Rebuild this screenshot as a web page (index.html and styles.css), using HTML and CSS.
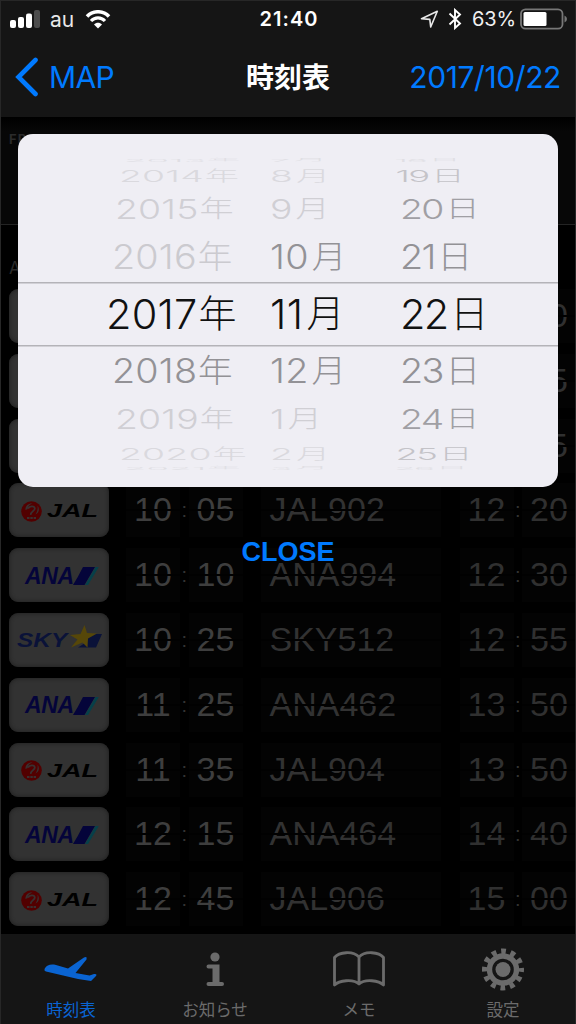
FILE: index.html
```html
<!DOCTYPE html>
<html lang="ja">
<head>
  <meta charset="UTF-8" />
  <meta name="viewport" content="width=device-width, initial-scale=1.0" />
  <title>時刻表</title>
  <link rel="stylesheet" href="styles.css">
</head>
<body>
  <!-- Shared logo shapes -->
  <svg class="defs" width="0" height="0">
    <symbol id="crane" viewBox="0 0 21 21">
      <circle cx="10.5" cy="10.5" r="10.3" fill="#520000"/>
      <path d="M4.500 9C4 4.500 8 1.800 11.500 2.500C8.500 3.500 6.500 5.500 6.800 8ZM16.500 4.500C19 8 18 12 14.500 13.500C16.500 10.500 17 7.500 16.500 4.500Z" fill="#393030"/>
      <path d="M7 7.500C8.500 4.800 13.500 4.500 13.800 7.500C14 10 9.500 10.500 9.800 13.800" fill="none" stroke="#393030" stroke-width="1.800"/>
      <path d="M6 17H8.500M9.300 17H11.800M12.600 17H15" stroke="#393030" stroke-width="1.800"/>
    </symbol>
    <symbol id="anaTail" viewBox="0 0 26 18">
      <path d="M10 0H22L11.500 18H0Q5 10 10 0Z" fill="#04043a"/>
      <path d="M22.500 0H25.800L15 18H12Z" fill="#06404a"/>
    </symbol>
    <symbol id="skyTail" viewBox="0 0 32 23">
      <path d="M21 9H32L26 22.500H8L15 18Z" fill="#0a1238"/>
      <path d="M14.500 0L17 8L27 8.500L18 13.500L17.500 22.500L12.500 17.500L1 22.500L7.500 14.500L0 10L10.500 9Z" fill="#564709"/>
    </symbol>
  </svg>

  <div class="screen">
    <!-- Status bar and navigation -->
    <header>
      <div class="status-bar">
        <div class="status-left">
          <svg width="30" height="18" viewBox="0 0 30 18">
            <rect x="0" y="10" width="6" height="8" rx="2" fill="#fff"/>
            <rect x="8" y="7" width="6" height="11" rx="2" fill="#fff"/>
            <rect x="16" y="3.500" width="6" height="14.500" rx="2" fill="#fff"/>
            <rect x="24" y="0" width="6" height="18" rx="2" fill="#4c4c4c"/>
          </svg>
          <span class="carrier">au</span>
          <svg width="26" height="19" viewBox="0 0 26 19">
            <path d="M2 6.500C8 .2 18 .2 24 6.500" fill="none" stroke="#fff" stroke-width="3.600"/>
            <path d="M6 11C10 6.800 16 6.800 20 11" fill="none" stroke="#fff" stroke-width="3.200"/>
            <path d="M9 14.500C11.300 12 14.700 12 17 14.500L13 18.500Z" fill="#fff"/>
          </svg>
        </div>
        <span class="clock">21:40</span>
        <div class="status-right">
          <svg width="19" height="19" viewBox="0 0 19 19">
            <path d="M1.500 8.800L17.300 1.300L10.700 17L9.800 9.400Z" fill="none" stroke="#e8e8e8" stroke-width="1.600" stroke-linejoin="round"/>
          </svg>
          <svg class="bluetooth" width="14" height="22" viewBox="0 0 14 22">
            <path d="M1.500 5.500L12 15.500L7 20V2L12 6.500L1.500 16.500" fill="none" stroke="#fff" stroke-width="1.900"/>
          </svg>
          <span class="percent">63%</span>
          <svg width="48" height="22" viewBox="0 0 48 22">
            <rect x="1" y="1.300" width="41.500" height="19.400" rx="4.500" fill="none" stroke="#777" stroke-width="1.800"/>
            <rect x="3.500" y="4" width="23" height="14" rx="1.500" fill="#fff"/>
            <path d="M44.500 7.500Q47 8.500 47 11T44.500 14.500Z" fill="#777"/>
          </svg>
        </div>
      </div>
      <nav class="nav-bar">
        <a class="back">
          <svg width="24" height="40" viewBox="0 0 24 40">
            <path d="M20.500 3L3.500 20L20.500 37" fill="none" stroke="#007aff" stroke-width="4.600" stroke-linecap="round" stroke-linejoin="miter"/>
          </svg>
          <span>MAP</span>
        </a>
        <h1>時刻表</h1>
        <a class="date">2017/10/22</a>
      </nav>
    </header>

    <!-- Timetable behind the picker -->
    <section class="route"><span>FROM</span></section>
    <main class="board">
      <div class="board-head">A</div>
      <div class="flight"><div class="logo"></div><b class="edge flap">0</b></div>
      <div class="flight"><div class="logo"></div><b class="edge flap">5</b></div>
      <div class="flight"><div class="logo"></div><b class="edge flap">5</b></div>
      <div class="flight">
        <div class="logo jal"><svg><use href="#crane"/></svg><span>JAL</span></div>
        <b class="flap">10</b><i>:</i><b class="flap">05</b><b class="flap name">JAL902</b><b class="flap arr">12</b><i>:</i><b class="flap arr">20</b>
      </div>
      <div class="flight">
        <div class="logo ana"><span>ANA</span><svg><use href="#anaTail"/></svg></div>
        <b class="flap">10</b><i>:</i><b class="flap">10</b><b class="flap name">ANA994</b><b class="flap arr">12</b><i>:</i><b class="flap arr">30</b>
      </div>
      <div class="flight">
        <div class="logo sky"><span>SKY</span><svg><use href="#skyTail"/></svg></div>
        <b class="flap">10</b><i>:</i><b class="flap">25</b><b class="flap name">SKY512</b><b class="flap arr">12</b><i>:</i><b class="flap arr">55</b>
      </div>
      <div class="flight">
        <div class="logo ana"><span>ANA</span><svg><use href="#anaTail"/></svg></div>
        <b class="flap">11</b><i>:</i><b class="flap">25</b><b class="flap name">ANA462</b><b class="flap arr">13</b><i>:</i><b class="flap arr">50</b>
      </div>
      <div class="flight">
        <div class="logo jal"><svg><use href="#crane"/></svg><span>JAL</span></div>
        <b class="flap">11</b><i>:</i><b class="flap">35</b><b class="flap name">JAL904</b><b class="flap arr">13</b><i>:</i><b class="flap arr">50</b>
      </div>
      <div class="flight">
        <div class="logo ana"><span>ANA</span><svg><use href="#anaTail"/></svg></div>
        <b class="flap">12</b><i>:</i><b class="flap">15</b><b class="flap name">ANA464</b><b class="flap arr">14</b><i>:</i><b class="flap arr">40</b>
      </div>
      <div class="flight">
        <div class="logo jal"><svg><use href="#crane"/></svg><span>JAL</span></div>
        <b class="flap">12</b><i>:</i><b class="flap">45</b><b class="flap name">JAL906</b><b class="flap arr">15</b><i>:</i><b class="flap arr">00</b>
      </div>
    </main>

    <!-- Tab bar -->
    <footer>
      <a class="tab active">
        <svg width="54" height="44" viewBox="0 0 54 44">
          <path d="M.5 21C3 16.500 7 16 12 17L24 20.500L40 9.500Q43.500 8 42.500 11.500L31.500 25L45.500 27.500L50 26Q53.500 25.500 52 28L47 33L34 31L2 23.500Q0 23 .5 21Z" fill="#0a64d2"/>
        </svg>
        <span>時刻表</span>
      </a>
      <a class="tab">
        <svg width="54" height="44" viewBox="0 0 54 44">
          <circle cx="27" cy="9" r="4.600" fill="#6b6b6b"/>
          <path d="M20.500 16.500H31.500V34H34Q36 34 36 36T34 38H20.500Q18.500 38 18.500 36T20.500 34H24.500V20.500H20.500Q18.500 20.500 18.500 18.500T20.500 16.500Z" fill="#6b6b6b"/>
        </svg>
        <span>お知らせ</span>
      </a>
      <a class="tab">
        <svg width="54" height="44" viewBox="0 0 54 44">
          <path d="M2.500 37V9.500C7 4 21 2.500 27 9C33 2.500 47 4 51.500 9.500V37C47 32.500 33 30.500 27 36C21 30.500 7 32.500 2.500 37ZM27 9V36" fill="none" stroke="#6b6b6b" stroke-width="2.800" stroke-linejoin="round"/>
        </svg>
        <span>メモ</span>
      </a>
      <a class="tab">
        <svg width="54" height="44" viewBox="0 0 54 44">
          <circle cx="27" cy="21.500" r="13.500" fill="none" stroke="#6b6b6b" stroke-width="5.400"/>
          <circle cx="27" cy="21.500" r="18.300" fill="none" stroke="#6b6b6b" stroke-width="5.400" stroke-dasharray="4.790 4.790" stroke-dashoffset="2.400"/>
          <circle cx="27" cy="21.500" r="7.500" fill="#6b6b6b"/>
        </svg>
        <span>設定</span>
      </a>
    </footer>

    <!-- Date picker dialog -->
    <div class="dialog">
      <div class="picker">
        <div class="wheel year">
          <p class="edge-row"><span>2013<em>年</em></span></p>
          <p class="far up"><span>2014<em>年</em></span></p>
          <p class="mid up"><span>2015<em>年</em></span></p>
          <p class="near up"><span>2016<em>年</em></span></p>
          <p class="selected"><span>2017<em>年</em></span></p>
          <p class="near live"><span>2018<em>年</em></span></p>
          <p class="mid"><span>2019<em>年</em></span></p>
          <p class="far"><span>2020<em>年</em></span></p>
          <p class="edge-row"><span>2021<em>年</em></span></p>
        </div>
        <div class="wheel month">
          <p class="edge-row"><span>7<em>月</em></span></p>
          <p class="far up"><span>8<em>月</em></span></p>
          <p class="mid up"><span>9<em>月</em></span></p>
          <p class="near up live"><span>10<em>月</em></span></p>
          <p class="selected"><span>11<em>月</em></span></p>
          <p class="near live"><span>12<em>月</em></span></p>
          <p class="mid"><span>1<em>月</em></span></p>
          <p class="far"><span>2<em>月</em></span></p>
          <p class="edge-row"><span>3<em>月</em></span></p>
        </div>
        <div class="wheel day">
          <p class="edge-row"><span>18<em>日</em></span></p>
          <p class="far up live"><span>19<em>日</em></span></p>
          <p class="mid up live"><span>20<em>日</em></span></p>
          <p class="near up live"><span>21<em>日</em></span></p>
          <p class="selected"><span>22<em>日</em></span></p>
          <p class="near live"><span>23<em>日</em></span></p>
          <p class="mid live"><span>24<em>日</em></span></p>
          <p class="far live"><span>25<em>日</em></span></p>
          <p class="edge-row"><span>26<em>日</em></span></p>
        </div>
      </div>
      <button type="button">CLOSE</button>
    </div>
  </div>
</body>
</html>
```
FILE: styles.css
```css
/* Base styling */
* {
  box-sizing: border-box;
}
body {
  margin: 0;
  background: #000;
  font-family: Inter, "Noto Sans CJK JP", sans-serif;
}
svg {
  display: block;
  flex: none;
}
.defs {
  position: absolute;
}
.screen {
  position: relative;
  width: 576px;
  height: 1024px;
  overflow: hidden;
  display: flex;
  flex-direction: column;
}
/* Thin frame round the screen */
.screen::after {
  content: "";
  position: absolute;
  inset: 0;
  border: 1px solid #272727;
  border-bottom: 0;
}
/* Header */
header {
  height: 117px;
  background: #151515;
  color: #fff;
}
.status-bar {
  display: grid;
  grid-template-columns: 1fr auto 1fr;
  align-items: center;
  height: 38px;
  padding: 0 8px 0 10px;
}
.status-left,
.status-right {
  display: flex;
  align-items: center;
}
.status-right {
  justify-content: flex-end;
}
.carrier {
  font-size: 21px;
  margin: 0 11px 0 10px;
  color: #e8e8e8;
}
.clock {
  font-size: 20px;
  font-weight: 600;
  letter-spacing: 1px;
}
.bluetooth {
  margin: 0 10px 0 9px;
}
.percent {
  font-size: 20px;
  letter-spacing: -0.1px;
  margin-right: 4px;
  color: #f0f0f0;
}
.nav-bar {
  display: grid;
  grid-template-columns: 1fr auto 1fr;
  align-items: center;
  height: 77px;
  padding: 0 15px;
  font-size: 30px;
  color: #007aff;
}
.back {
  display: flex;
  align-items: center;
  gap: 10px;
  letter-spacing: -0.6px;
}
.nav-bar h1 {
  margin: 0;
  padding-top: 2px;
  font-size: 28px;
  font-weight: 700;
  line-height: 40px;
  color: #fff;
}
.date {
  text-align: right;
  letter-spacing: -0.4px;
}
/* Timetable */
.route {
  height: 108px;
  padding: 15px 9px;
  background: linear-gradient(#000, #070707 14px);
  border-bottom: 1px solid #242424;
  font-size: 13px;
  font-weight: 700;
  line-height: 14px;
  letter-spacing: 1px;
  color: #2b2b2b;
}
.board {
  height: 709px;
  padding-left: 9px;
  overflow: hidden;
}
.board-head {
  height: 64px;
  padding-top: 32px;
  font-size: 17px;
  line-height: 23px;
  color: #2b2b2b;
}
.flight {
  display: flex;
  align-items: center;
  height: 54px;
  margin-bottom: 10.8px;
}
.logo {
  width: 100px;
  height: 54px;
  padding-top: 2px;
  margin-right: 17px;
  border-radius: 9px;
  background: #323232;
  box-shadow: inset 0 0 4px #1c1c1c;
  display: flex;
  align-items: center;
  justify-content: center;
  flex: none;
}
.logo span {
  font-family: "Liberation Sans", sans-serif;
  font-weight: 700;
  font-style: italic;
}
.jal {
  justify-content: flex-start;
  padding-left: 12px;
  gap: 5px;
}
.jal svg {
  width: 21px;
  height: 21px;
}
.jal span {
  font-size: 19px;
  color: #000;
  transform: scaleX(1.42);
  transform-origin: left;
}
.ana {
  justify-content: flex-start;
  padding-left: 16px;
}
.ana svg {
  width: 26px;
  height: 18px;
}
.ana span {
  font-size: 23px;
  letter-spacing: -0.3px;
  color: #04043a;
  margin-right: -1px;
}
.sky {
  justify-content: flex-start;
  padding-left: 8px;
}
.sky svg {
  width: 32px;
  height: 23px;
  margin-top: -8px;
}
.sky span {
  width: 53px;
  font-size: 20px;
  color: #0a1238;
  transform: scaleX(1.22);
  transform-origin: left;
}
.flap {
  position: relative;
  flex: none;
  width: 54px;
  height: 54px;
  background: #030303;
  font: 34px/52px "Liberation Sans", sans-serif;
  text-align: center;
  color: #3e3e3e;
}
/* Split line of the flap */
.flap::after {
  content: "";
  position: absolute;
  left: 0;
  right: 0;
  top: 26px;
  height: 2px;
  background: #010101;
}
.flight i {
  width: 9px;
  font: 20px/54px "Liberation Sans", sans-serif;
  text-align: center;
  color: #333;
}
.name {
  width: 180px;
  margin: 0 19px 0 18px;
  padding-left: 9px;
  text-align: left;
  color: #323232;
}
.arr {
  color: #303030;
}
.edge {
  margin-left: 396px;
  padding-right: 8px;
  text-align: right;
  color: #303030;
}
/* Tab bar */
footer {
  display: grid;
  grid-template-columns: repeat(4, 1fr);
  height: 90px;
  background: #151515;
}
.tab {
  display: flex;
  flex-direction: column;
  align-items: center;
  padding-top: 14px;
  padding-right: 2px;
  font-size: 16.5px;
  line-height: 24px;
  color: #6b6b6b;
}
.tab span {
  margin-top: 6px;
}
.tab.active {
  color: #0a64d2;
}
/* Dialog lies over the timetable */
.dialog {
  position: absolute;
  top: 134px;
  left: 18px;
  width: 540px;
  display: flex;
  flex-direction: column;
  align-items: center;
  z-index: 1;
}
.picker {
  width: 540px;
  height: 353px;
  padding-top: 24px;
  border-radius: 15px;
  display: grid;
  grid-template-columns: 252px 130px 158px;
  align-content: start;
  background:
    linear-gradient(#b4b3b8, #b4b3b8) 0 148px / 100% 1.5px no-repeat,
    linear-gradient(#b4b3b8, #b4b3b8) 0 211px / 100% 1.5px no-repeat,
    #efeef4;
}
.wheel p {
  margin: 0;
  display: flex;
  align-items: center;
}
.wheel span {
  flex: none;
  font-size: 41.5px;
  font-weight: 300;
  line-height: 60px;
  letter-spacing: -1.8px;
  white-space: nowrap;
  transform-origin: left center;
}
.wheel em {
  font-style: normal;
  font-size: 38px;
  line-height: 1;
  letter-spacing: 0;
  margin-left: 3px;
  vertical-align: 2.5px;
}
.year {
  padding-left: 88px;
}
.year span {
  letter-spacing: 0.2px;
}
.year em {
  margin-left: 1px;
}
.month span {
  letter-spacing: 0.4px;
}
/* Rows flatten towards both ends of the wheel */
.wheel .selected {
  height: 61px;
  padding-top: 1px;
  color: #111;
}
.near {
  height: 53px;
}
.near span {
  transform: scale(0.91, 0.83);
}
.mid {
  height: 44px;
}
.mid.up {
  height: 42px;
}
.mid span {
  transform: scale(0.9, 0.64);
}
.far {
  height: 25px;
}
.far span {
  transform: scale(0.9, 0.38);
}
.edge-row {
  height: 5px;
}
.edge-row span {
  line-height: 40px;
  transform: scale(0.88, 0.09);
}
.year .near { padding-left: 6px; }
.year .mid { padding-left: 9px; }
.year .far { padding-left: 13px; }
.year .edge-row { padding-left: 18px; }
.wheel .near { color: #cbcacf; }
.wheel .mid { color: #d0cfd4; }
.wheel .far { color: #dad9de; }
.wheel .edge-row { color: #e0dfe4; }
.wheel .near.live { color: #939296; }
.wheel .mid.live { color: #a09fa4; }
.wheel .far.live { color: #c4c3c8; }
/* Day wheel bends inwards */
.day .far span,
.day .edge-row span { transform-origin: 20px center; }
.day .far span { transform: translateX(-7px) scale(0.88, 0.38); }
.day .edge-row span { transform: translateX(-9px) scale(0.84, 0.09); }
.dialog button {
  margin-top: 49px;
  padding: 0;
  border: 0;
  background: none;
  font: 700 27px/32px "Liberation Sans", sans-serif;
  color: #007aff;
}
```
